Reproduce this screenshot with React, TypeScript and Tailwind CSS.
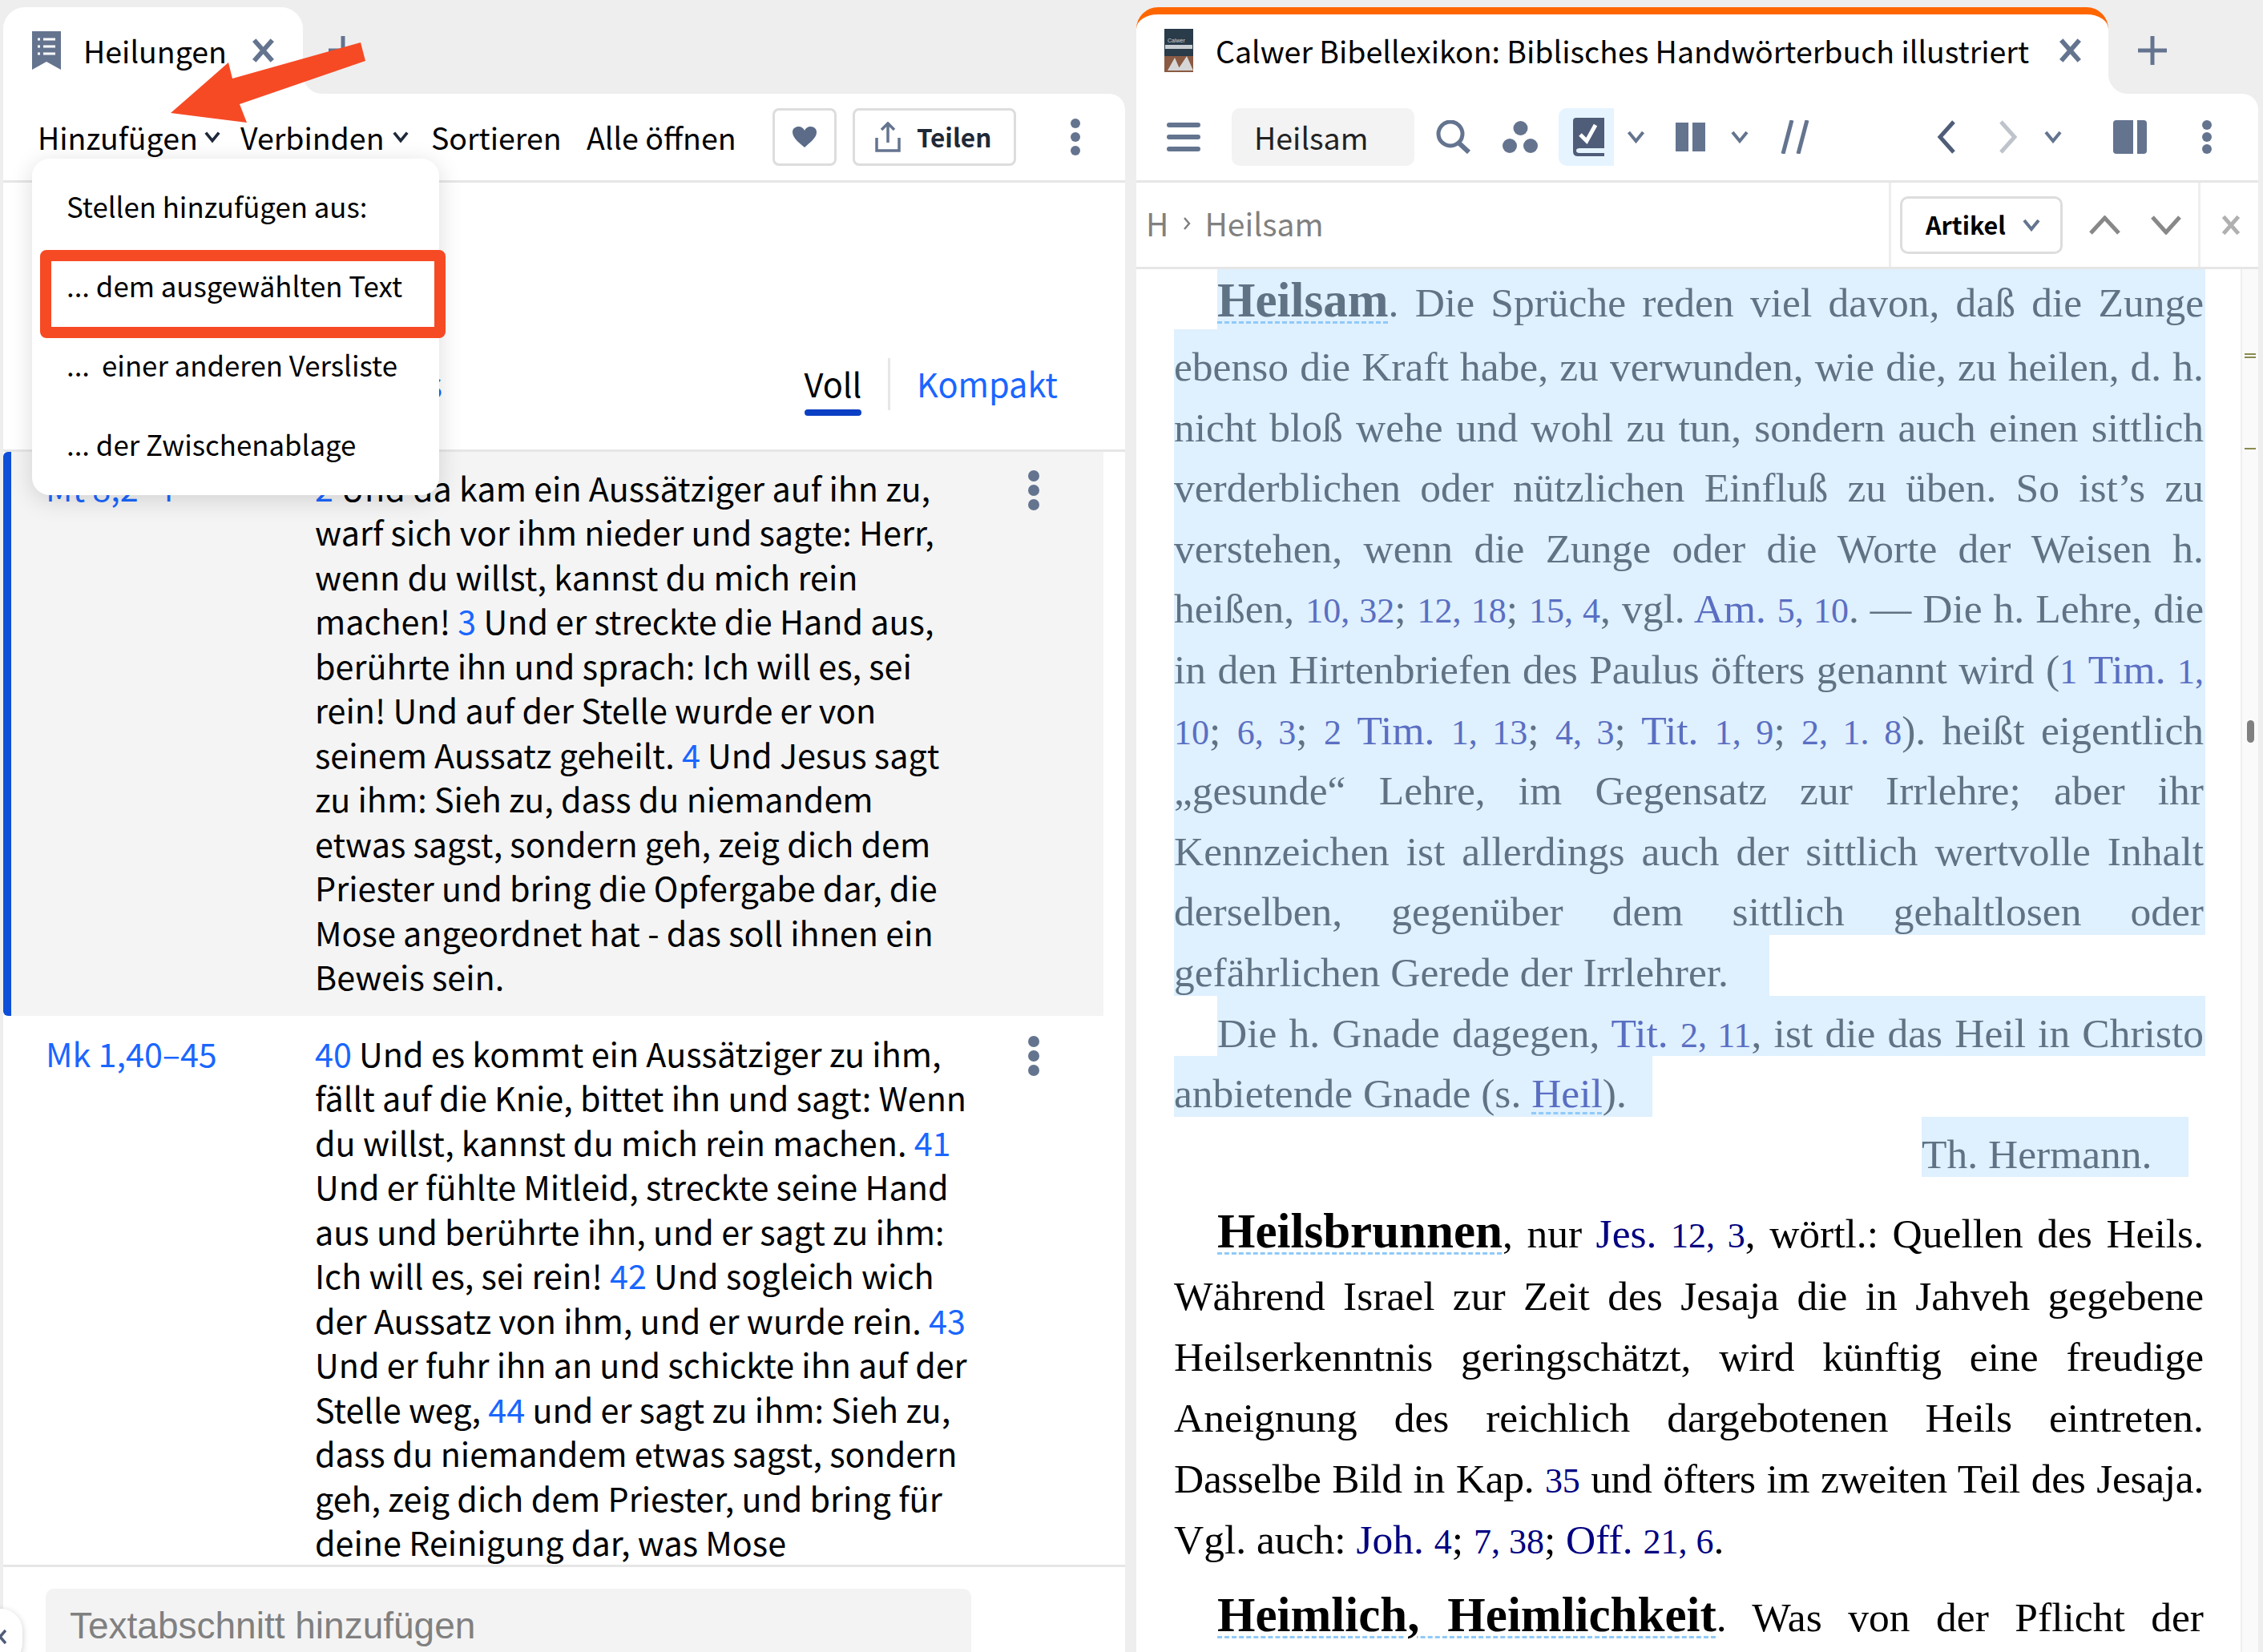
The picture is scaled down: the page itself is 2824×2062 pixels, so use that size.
import React from "react";

const S = "#64748f";

function Chev({ c = S, w = 22 }: { c?: string; w?: number }) {
  return (
    <svg width={w} height={16} viewBox="0 0 22 16" className="shrink-0">
      <path d="M2 2 L11 13 L20 2" fill="none" stroke={c} strokeWidth="4" />
    </svg>
  );
}
function Kebab({ r = 6, gap = 18, c = S }: { r?: number; gap?: number; c?: string }) {
  return (
    <svg width={r * 2} height={gap * 2 + r * 2} className="shrink-0">
      <ellipse cx={r} cy={r} rx={r} ry={r} fill={c} />
      <ellipse cx={r} cy={r + gap} rx={r} ry={r} fill={c} />
      <ellipse cx={r} cy={r + gap * 2} rx={r} ry={r} fill={c} />
    </svg>
  );
}
function XIcon({ c = S, w = 29, h = 30 }: { c?: string; w?: number; h?: number }) {
  return (
    <svg width={w} height={h} viewBox="0 0 27 28" className="shrink-0">
      <path d="M3 2 L24 26 M24 2 L3 26" stroke={c} strokeWidth="5.5" fill="none" />
    </svg>
  );
}
function Plus({ size = 36 }: { size?: number }) {
  return (
    <svg width={size} height={size} viewBox="0 0 36 36" className="shrink-0">
      <path d="M18 0 V36 M0 18 H36" stroke={S} strokeWidth="5" strokeLinecap="round" />
    </svg>
  );
}

function V({ children }: { children: React.ReactNode }) {
  return <span className="text-[#1a66ff]">{children}</span>;
}

function VerseLines({ lines }: { lines: React.ReactNode[] }) {
  return (
    <div className="w-[830px] shrink-0 text-[41.3px] leading-[55.45px] text-black">
      {lines.map((l, i) => (
        <div key={i} className="whitespace-nowrap">
          {l}
        </div>
      ))}
    </div>
  );
}

function Row({ children }: { children: React.ReactNode }) {
  return (
    <div className="pl-[47px]">
      <div className="h-[75.6px] pt-[18px] leading-[57.6px] whitespace-nowrap text-justify [text-align-last:justify] bg-[#dff0fe] w-[1287px] pr-[2px]">
        {children}
      </div>
    </div>
  );
}
function L({ children }: { children: React.ReactNode }) {
  return <span className="text-[#5a6fc2]">{children}</span>;
}
function N({ children }: { children: React.ReactNode }) {
  return <span className="text-[#000080]">{children}</span>;
}
function D({ children }: { children: React.ReactNode }) {
  return <span className="text-[44px]">{children}</span>;
}
function Head({ children }: { children: React.ReactNode }) {
  return (
    <span className="font-bold text-[61px] underline decoration-dashed decoration-[#90caf9] decoration-[3px] underline-offset-[6px]">
      {children}
    </span>
  );
}
function BL({ children }: { children: React.ReactNode }) {
  return (
    <div className="h-[76px] leading-[76px] whitespace-nowrap text-justify [text-align-last:justify] w-[1285px] ml-[47px]">
      {children}
    </div>
  );
}

function MenuItem({ children }: { children: React.ReactNode }) {
  return <div className="h-[99px] pl-[43px] flex items-center text-[34.8px] text-black whitespace-nowrap">{children}</div>;
}

export default function App() {
  return (
    <div className="relative w-[2824px] h-[2062px] overflow-hidden bg-[#eeeeee] flex [font-family:Noto_Sans_CJK_SC,sans-serif] text-black">
      {/* LEFT PANEL */}
      <div className="ml-[4px] w-[1400px] h-full flex flex-col shrink-0">
        <div className="h-[117px] pt-[9px] flex shrink-0">
          <div className="w-[374px] h-[108px] bg-white rounded-t-[27px] flex items-center pl-[36px]">
            <svg width="36" height="48" viewBox="0 0 36 48" className="shrink-0">
              <path d="M0 0 H36 V48 L18 38 L0 48 Z" fill={S} />
              <path d="M7 10 H10 M14 10 H29 M7 19 H10 M14 19 H29 M7 28 H10 M14 28 H29" stroke="#fff" strokeWidth="3" />
            </svg>
            <span className="ml-[28px] w-[178px] text-[37.5px] leading-none whitespace-nowrap">Heilungen</span>
            <div className="ml-[32px]">
              <XIcon />
            </div>
          </div>
          <div className="self-end w-[24px] h-[24px] bg-white shrink-0">
            <div className="w-full h-full bg-[#eeeeee] rounded-bl-[24px]" />
          </div>
          <div className="ml-[8px] mt-[36px]">
            <Plus />
          </div>
        </div>

        <div className="flex-1 min-h-0 bg-white rounded-tr-[20px] flex flex-col">
          {/* toolbar */}
          <div className="h-[111px] shrink-0 border-b-[3px] border-[#e6e6e6] flex items-center pl-[43px] text-[37.5px] whitespace-nowrap">
            <span className="w-[199px]">Hinzufügen</span>
            <div className="ml-[9px] w-[20px]">
              <Chev c="#1e293b" w={20} />
            </div>
            <span className="ml-[25px] w-[180px]">Verbinden</span>
            <div className="ml-[10px] w-[20px]">
              <Chev c="#1e293b" w={20} />
            </div>
            <span className="ml-[28px] w-[162px]">Sortieren</span>
            <span className="ml-[32px] w-[188px]">Alle öffnen</span>
            <div className="ml-[44px] w-[80px] h-[72px] border-[3px] border-[#dddddd] rounded-[8px] flex items-center justify-center">
              <svg width="30" height="26" viewBox="0 0 30 26">
                <path d="M15 26 C8 20 0 14 0 7 C0 2 4 0 7.5 0 C11 0 14 2 15 5 C16 2 19 0 22.5 0 C26 0 30 2 30 7 C30 14 22 20 15 26 Z" fill="#5b6b88" />
              </svg>
            </div>
            <div className="ml-[20px] w-[204px] h-[72px] border-[3px] border-[#dddddd] rounded-[8px] flex items-center pl-[25px]">
              <svg width="32" height="38" viewBox="0 0 32 38" className="shrink-0">
                <path d="M16 26 V2 M8 10 L16 2 L24 10 M2 20 V36 H30 V20" fill="none" stroke={S} strokeWidth="3.5" />
              </svg>
              <span className="ml-[20px] text-[31.5px] font-semibold text-[#1f2937]">Teilen</span>
            </div>
            <div className="ml-[68px]">
              <Kebab r={6} gap={17} />
            </div>
          </div>

          {/* view row */}
          <div className="h-[336px] shrink-0 border-b-[3px] border-[#e6e6e6] flex items-end justify-end pr-[84px] text-[41.5px]">
            <span className="mr-auto w-[548px] text-right leading-[50px] mb-[58px] text-[#1a66ff]">Verses</span>
            <div className="w-[71px] flex flex-col items-center mb-[42px]">
              <span className="leading-[50px] mb-[3px]">Voll</span>
              <div className="mt-[5px] w-full h-[8px] rounded-full bg-[#0b3fc4]" />
            </div>
            <div className="ml-[33px] mr-[33px] w-[3px] h-[65px] mb-[49px] bg-[#e6e6e6]" />
            <span className="leading-[50px] mb-[58px] text-[#1a66ff]">Kompakt</span>
          </div>

          {/* list */}
          <div className="flex-1 min-h-0 overflow-hidden pr-[27px] flex flex-col">
            <div className="h-[704px] shrink-0 bg-[#f4f4f4] flex pt-[17px] border-l-[10px] border-[#0d4fd8] rounded-l-[6px]">
              <div className="ml-[43px] w-[336px] text-[41.3px] leading-[55.45px] text-[#1a66ff] shrink-0">Mt 8,2–4</div>
              <VerseLines
                lines={[
                  <><V>2</V> Und da kam ein Aussätziger auf ihn zu,</>,
                  "warf sich vor ihm nieder und sagte: Herr,",
                  "wenn du willst, kannst du mich rein",
                  <>machen! <V>3</V> Und er streckte die Hand aus,</>,
                  "berührte ihn und sprach: Ich will es, sei",
                  "rein! Und auf der Stelle wurde er von",
                  <>seinem Aussatz geheilt. <V>4</V> Und Jesus sagt</>,
                  "zu ihm: Sieh zu, dass du niemandem",
                  "etwas sagst, sondern geh, zeig dich dem",
                  "Priester und bring die Opfergabe dar, die",
                  "Mose angeordnet hat - das soll ihnen ein",
                  "Beweis sein.",
                ]}
              />
              <div className="ml-[60px] mt-[6px]">
                <Kebab r={7} gap={18} />
              </div>
            </div>
            <div className="flex-1 min-h-0 flex pt-[19px] overflow-hidden">
              <div className="ml-[53px] w-[336px] text-[41.3px] leading-[55.45px] text-[#1a66ff] shrink-0">Mk 1,40–45</div>
              <VerseLines
                lines={[
                  <><V>40</V> Und es kommt ein Aussätziger zu ihm,</>,
                  "fällt auf die Knie, bittet ihn und sagt: Wenn",
                  <>du willst, kannst du mich rein machen. <V>41</V></>,
                  "Und er fühlte Mitleid, streckte seine Hand",
                  "aus und berührte ihn, und er sagt zu ihm:",
                  <>Ich will es, sei rein! <V>42</V> Und sogleich wich</>,
                  <>der Aussatz von ihm, und er wurde rein. <V>43</V></>,
                  "Und er fuhr ihn an und schickte ihn auf der",
                  <>Stelle weg, <V>44</V> und er sagt zu ihm: Sieh zu,</>,
                  "dass du niemandem etwas sagst, sondern",
                  "geh, zeig dich dem Priester, und bring für",
                  "deine Reinigung dar, was Mose",
                ]}
              />
              <div className="ml-[60px] mt-[6px]">
                <Kebab r={7} gap={18} />
              </div>
            </div>
          </div>

          {/* bottom */}
          <div className="h-[109px] shrink-0 border-t-[3px] border-[#e6e6e6] pt-[27px] pl-[53px]">
            <div className="w-[1155px] h-[100px] bg-[#f3f3f3] rounded-t-[10px] pl-[30px] pt-[18px] text-[46px] leading-[56px] text-[#808080] [font-family:Liberation_Sans,sans-serif]">
              Textabschnitt hinzufügen
            </div>
          </div>
        </div>
      </div>

      {/* RIGHT PANEL */}
      <div className="ml-[14px] w-[1400px] h-full flex flex-col shrink-0">
        <div className="h-[117px] pt-[9px] flex shrink-0">
          <div className="w-[1213px] h-[108px] bg-white rounded-t-[27px] border-t-[9px] border-[#ff6600] flex items-center pl-[35px] pb-[9px]">
            <svg width="36" height="54" viewBox="0 0 36 54" className="shrink-0">
              <rect width="36" height="54" fill="#2a3b4a" />
              <rect x="1" y="20" width="34" height="5" fill="#c8ced2" />
              <rect y="34" width="36" height="20" fill="#8a5a42" />
              <path d="M4 52 L13 36 L20 52 Z M16 52 L28 34 L36 52 Z" fill="#d6d6d6" />
              <text x="4" y="17" fontSize="7" fill="#cfd6da" fontFamily="Liberation Sans">Calwer</text>
            </svg>
            <span className="ml-[28px] w-[1016px] text-[37.5px] leading-none whitespace-nowrap">
              Calwer Bibellexikon: Biblisches Handwörterbuch illustriert
            </span>
            <div className="ml-[36px]">
              <XIcon />
            </div>
          </div>
          <div className="self-end w-[24px] h-[24px] bg-white shrink-0">
            <div className="w-full h-full bg-[#eeeeee] rounded-bl-[24px]" />
          </div>
          <div className="ml-[13px] mt-[36px]">
            <Plus />
          </div>
        </div>

        <div className="flex-1 min-h-0 bg-white rounded-tr-[20px] flex flex-col">
          {/* toolbar */}
          <div className="h-[111px] shrink-0 border-b-[3px] border-[#e6e6e6] flex items-center">
            <svg width="42" height="36" viewBox="0 0 42 36" className="ml-[38px] shrink-0">
              <path d="M3 3 H39 M3 18 H39 M3 33 H39" stroke={S} strokeWidth="6" strokeLinecap="round" />
            </svg>
            <div className="ml-[39px] w-[228px] h-[72px] rounded-[10px] bg-[#f3f3f3] flex items-center pl-[28px] text-[37.5px] text-[#222222]">
              Heilsam
            </div>
            <svg width="43" height="42" viewBox="0 0 43 42" className="ml-[27px] shrink-0">
              <circle cx="18" cy="17" r="15" fill="none" stroke={S} strokeWidth="5" />
              <path d="M28 28 L41 40" stroke={S} strokeWidth="6" />
            </svg>
            <svg width="45" height="40" viewBox="0 0 45 40" className="ml-[40px] shrink-0">
              <circle cx="22.5" cy="9" r="9" fill={S} />
              <circle cx="9" cy="31" r="9" fill={S} />
              <circle cx="35" cy="31" r="9" fill={S} />
            </svg>
            <div className="ml-[25px] w-[69px] h-[72px] bg-[#e6f4ff] rounded-l-[10px] flex items-center pl-[18px]">
              <svg width="39" height="48" viewBox="0 0 39 48" className="shrink-0">
                <path d="M4 0 H39 V38 H8 Q4 38 4 41 Q4 44 8 44 H39 V48 H6 Q0 48 0 42 V4 Q0 0 4 0 Z" fill="#4f5d78" />
                <path d="M9 21 L17 29 L28 9" fill="none" stroke="#fff" strokeWidth="5" />
              </svg>
            </div>
            <div className="ml-[16px]">
              <Chev w={23} />
            </div>
            <svg width="37" height="36" viewBox="0 0 37 36" className="ml-[38px] shrink-0">
              <rect width="16" height="36" fill={S} />
              <rect x="21" width="16" height="36" fill={S} />
            </svg>
            <div className="ml-[32px]">
              <Chev />
            </div>
            <svg width="36" height="42" viewBox="0 0 36 42" className="ml-[40px] shrink-0">
              <path d="M14 0 L3 42 M33 0 L22 42" stroke={S} strokeWidth="5" />
            </svg>
            <svg width="23" height="42" viewBox="0 0 23 42" className="ml-[159px] shrink-0">
              <path d="M21 2 L4 21 L21 40" fill="none" stroke="#4f5d78" strokeWidth="5" />
            </svg>
            <svg width="23" height="42" viewBox="0 0 23 42" className="ml-[55px] shrink-0">
              <path d="M2 2 L19 21 L2 40" fill="none" stroke="#bfc3cb" strokeWidth="5" />
            </svg>
            <div className="ml-[33px]">
              <Chev />
            </div>
            <svg width="42" height="42" viewBox="0 0 42 42" className="ml-[64px] shrink-0">
              <path d="M4 0 H25 V42 H4 Q0 42 0 38 V4 Q0 0 4 0 Z" fill={S} />
              <path d="M30 0 H38 Q42 0 42 4 V38 Q42 42 38 42 H30 Z" fill={S} />
            </svg>
            <div className="ml-[69px]">
              <Kebab r={6} gap={15} />
            </div>
          </div>

          {/* breadcrumb row */}
          <div className="h-[108px] shrink-0 border-b-[3px] border-[#e6e6e6] flex items-stretch">
            <div className="w-[939px] flex items-center pl-[12px] pb-[4px] text-[39px] text-[#808080] whitespace-nowrap">
              <span>H</span>
              <svg width="10" height="18" viewBox="0 0 10 18" className="ml-[18px] mr-[17px]">
                <path d="M2 2 L8 9 L2 16" fill="none" stroke="#808080" strokeWidth="2.5" />
              </svg>
              <span>Heilsam</span>
            </div>
            <div className="w-[386px] border-l-[3px] border-[#eeeeee] flex items-center">
              <div className="ml-[11px] w-[203px] h-[72px] border-[3px] border-[#dddddd] rounded-[10px] flex items-center pl-[29px]">
                <span className="text-[30.5px] font-semibold w-[103px]">Artikel</span>
                <div className="ml-[18px]">
                  <Chev />
                </div>
              </div>
              <svg width="39" height="24" viewBox="0 0 39 24" className="ml-[33px] shrink-0">
                <path d="M2 22 L19.5 3 L37 22" fill="none" stroke="#888888" strokeWidth="5" />
              </svg>
              <svg width="38" height="24" viewBox="0 0 38 24" className="ml-[38px] shrink-0">
                <path d="M2 2 L19 21 L36 2" fill="none" stroke="#888888" strokeWidth="5" />
              </svg>
            </div>
            <div className="flex-1 border-l-[3px] border-[#eeeeee] flex items-center pl-[26px]">
              <XIcon c="#b0b0b0" w={24} h={30} />
            </div>
          </div>

          {/* article */}
          <div className="flex-1 min-h-0 flex overflow-hidden">
            <div className="w-[1378px] shrink-0 [font-family:Liberation_Serif,serif] text-[51.5px]">
              <div className="text-[#5f7385]">
                <div className="pl-[101px]">
                  <div className="h-[75px] pt-[3px] leading-[72px] whitespace-nowrap text-justify [text-align-last:justify] bg-[#dff0fe] w-[1233px] pr-[2px]">
                    <Head>Heilsam</Head>. Die Sprüche reden viel davon, daß die Zunge
                  </div>
                </div>
                <Row>ebenso die Kraft habe, zu verwunden, wie die, zu heilen, d. h.</Row>
                <Row>nicht bloß wehe und wohl zu tun, sondern auch einen sittlich</Row>
                <Row>verderblichen oder nützlichen Einfluß zu üben. So ist’s zu</Row>
                <Row>verstehen, wenn die Zunge oder die Worte der Weisen h.</Row>
                <Row>
                  heißen, <L><D>10, 32</D></L>; <L><D>12, 18</D></L>; <L><D>15, 4</D></L>, vgl. <L>Am. <D>5, 10</D></L>. — Die h. Lehre, die
                </Row>
                <Row>
                  in den Hirtenbriefen des Paulus öfters genannt wird (<L><D>1</D> Tim. <D>1,</D></L>
                </Row>
                <Row>
                  <L><D>10</D></L>; <L><D>6, 3</D></L>; <L><D>2</D> Tim. <D>1, 13</D></L>; <L><D>4, 3</D></L>; <L>Tit. <D>1, 9</D></L>; <L><D>2, 1. 8</D></L>). heißt eigentlich
                </Row>
                <Row>„gesunde“ Lehre, im Gegensatz zur Irrlehre; aber ihr</Row>
                <Row>Kennzeichen ist allerdings auch der sittlich wertvolle Inhalt</Row>
                <Row>derselben, gegenüber dem sittlich gehaltlosen oder</Row>
                <div className="ml-[47px] w-[743px] h-[75.6px] pt-[18px] leading-[57.6px] whitespace-nowrap bg-[#dff0fe]">
                  gefährlichen Gerede der Irrlehrer.
                </div>
                <div className="pl-[101px]">
                  <div className="h-[75.6px] pt-[18px] leading-[57.6px] whitespace-nowrap text-justify [text-align-last:justify] bg-[#dff0fe] w-[1233px] pr-[2px]">
                    Die h. Gnade dagegen, <L>Tit. <D>2, 11</D></L>, ist die das Heil in Christo
                  </div>
                </div>
                <div className="ml-[47px] w-[597px] h-[75.6px] pt-[18px] leading-[57.6px] whitespace-nowrap bg-[#dff0fe]">
                  anbietende Gnade (s.{" "}
                  <L>
                    <span className="underline decoration-dashed decoration-[#90caf9] decoration-[3px] underline-offset-[6px]">Heil</span>
                  </L>
                  ).
                </div>
                <div className="ml-[980px] w-[333px] h-[75.6px] pt-[18px] leading-[57.6px] whitespace-nowrap bg-[#dff0fe]">
                  Th. Hermann.
                </div>
              </div>
              <div className="mt-[30px] text-black">
                <div className="pl-[101px]">
                  <div className="h-[76px] leading-[76px] whitespace-nowrap text-justify [text-align-last:justify] w-[1231px]">
                    <Head>Heilsbrunnen</Head>, nur <N>Jes. <D>12, 3</D></N>, wörtl.: Quellen des Heils.
                  </div>
                </div>
                <div className="mt-[5px]">
                  <BL>Während Israel zur Zeit des Jesaja die in Jahveh gegebene</BL>
                  <BL>Heilserkenntnis geringschätzt, wird künftig eine freudige</BL>
                  <BL>Aneignung des reichlich dargebotenen Heils eintreten.</BL>
                  <div className="h-[76px] leading-[76px] whitespace-nowrap text-justify [text-align-last:justify] w-[1285px] ml-[47px] tracking-[-0.3px]">
                    Dasselbe Bild in Kap. <N><D>35</D></N> und öfters im zweiten Teil des Jesaja.
                  </div>
                  <div className="ml-[47px] h-[76px] leading-[76px] whitespace-nowrap">
                    Vgl. auch: <N>Joh. <D>4</D></N>; <N><D>7, 38</D></N>; <N>Off. <D>21, 6</D></N>.
                  </div>
                </div>
                <div className="mt-[18px] pl-[101px]">
                  <div className="h-[76px] leading-[76px] whitespace-nowrap text-justify [text-align-last:justify] w-[1231px]">
                    <Head>Heimlich, Heimlichkeit</Head>. Was von der Pflicht der
                  </div>
                </div>
              </div>
            </div>
            <div className="flex-1 border-l-[2px] border-[#eeeeee] bg-[#fafafa] flex flex-col items-center pt-[105px]">
              <div className="w-[14px] h-[6px] border-y-[2px] border-[#8a8a50]" />
              <div className="mt-[112px] w-[14px] h-[2px] bg-[#8a8a50]" />
              <div className="mt-[338px] w-[9px] h-[28px] rounded-full bg-[#808080]" />
            </div>
          </div>
        </div>
      </div>

      {/* DROPDOWN */}
      <div className="absolute left-[40px] top-[198px] w-[508px] h-[420px] bg-white rounded-[22px] shadow-[0_6px_30px_rgba(0,0,0,0.14)] pt-[10px]">
        <MenuItem>Stellen hinzufügen aus:</MenuItem>
        <MenuItem>... dem ausgewählten Text</MenuItem>
        <MenuItem>...<span className="ml-[15px]">einer anderen Versliste</span></MenuItem>
        <MenuItem>... der Zwischenablage</MenuItem>
      </div>
      {/* annotation box + arrow */}
      <div className="absolute left-[50px] top-[312px] w-[506px] h-[110px] border-[14px] border-[#f64a25] rounded-[8px]" />
      <svg className="absolute left-0 top-0" width="500" height="170" viewBox="0 0 500 170">
        <polygon points="213,141 285,78 290,98 450,53 456,76 299,130 308,153" fill="#f64a25" />
      </svg>
      {/* collapse circle */}
      <div className="absolute left-[-26px] top-[2008px] w-[54px] h-[70px] bg-white rounded-full shadow-[0_2px_8px_rgba(0,0,0,0.2)] flex items-center justify-end pr-[20px]">
        <svg width="10" height="20" viewBox="0 0 10 20">
          <path d="M9 2 L2 10 L9 18" fill="none" stroke="#4f5d78" strokeWidth="3.5" />
        </svg>
      </div>
    </div>
  );
}
